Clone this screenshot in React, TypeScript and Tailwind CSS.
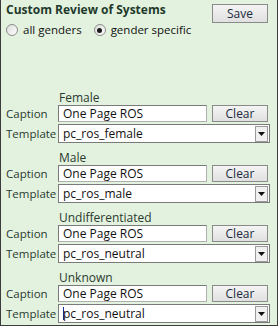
import React from 'react';

type Section = { title: string; caption: string; template: string; caret?: boolean };

const SECTIONS: Section[] = [
  { title: 'Female', caption: 'One Page ROS', template: 'pc_ros_female' },
  { title: 'Male', caption: 'One Page ROS', template: 'pc_ros_male' },
  { title: 'Undifferentiated', caption: 'One Page ROS', template: 'pc_ros_neutral' },
  { title: 'Unknown', caption: 'One Page ROS', template: 'pc_ros_neutral', caret: true },
];

function Button({ label, h = 'h-[17px]' }: { label: string; h?: string }) {
  return (
    <div
      className={`w-[56px] ${h} flex items-center justify-center border border-[#8a8a8a] bg-gradient-to-b from-[#f4f4f4] to-[#e0e0e0] text-[12px] leading-none text-[#1a2a40]`}
    >
      {label}
    </div>
  );
}

function Radio({ checked, label }: { checked?: boolean; label: string }) {
  return (
    <div className="flex items-center gap-[5px]">
      <div className="w-[12px] h-[12px] rounded-full border border-[#8c8c8c] bg-gradient-to-br from-[#dcdcdc] to-white flex items-center justify-center">
        {checked && <div className="w-[5px] h-[5px] rounded-full bg-[#1a1a1a]" />}
      </div>
      <span className="text-[11.5px] font-medium text-[#111]">{label}</span>
    </div>
  );
}

function SectionBlock({ s }: { s: Section }) {
  return (
    <div className="flex flex-col h-[60px]">
      <div className="h-[15px] pl-[58px] text-[12px] leading-[15px] text-[#2a3a30]">{s.title}</div>
      <div className="flex items-center h-[17px]">
        <div className="w-[57px] pl-[5px] text-[11.5px] text-[#2a3a30]">Caption</div>
        <div className="w-[149px] h-[17px] bg-white border border-[#b0b0b0] border-t-[#7a7a7a] border-l-[#7a7a7a] flex items-center pl-[4px] text-[12px] text-[#111]">
          {s.caption}
        </div>
        <div className="ml-[5px]">
          <Button label="Clear" />
        </div>
      </div>
      <div className="flex items-center h-[19px] mt-[2px]">
        <div className="w-[57px] pl-[5px] text-[11.5px] text-[#2a3a30]">Template</div>
        <div className="w-[212px] h-[19px] bg-white border border-[#7a7a7a] flex items-center">
          <div className="flex-1 flex items-center pl-[4px] text-[12px] text-[#111]">
            {s.caret && <span className="w-[1px] h-[13px] bg-[#1030a0] -mr-[1px]" />}
            {s.template}
          </div>
          <div className="w-[13px] h-[16px] mr-[1px] bg-[#f0f0f0] border border-[#9a9a9a] flex items-center justify-center">
            <svg width="7" height="4" viewBox="0 0 7 4">
              <polygon points="0,0 7,0 3.5,4" fill="#111" />
            </svg>
          </div>
        </div>
      </div>
    </div>
  );
}

export default function App() {
  return (
    <div className="w-[278px] h-[326px] bg-[#e3f2df] border-x border-b border-[#3c3c3c] font-['Open_Sans',sans-serif] overflow-hidden">
      <div className="h-[90px] flex justify-between pl-[5px] pr-[9px]">
        <div className="flex flex-col">
          <div className="h-[19px] leading-[19px] text-[12px] font-bold text-[#1f3a2c]">Custom Review of Systems</div>
          <div className="flex items-center gap-[12px] h-[22px]">
            <Radio label="all genders" />
            <Radio checked label="gender specific" />
          </div>
        </div>
        <div className="pt-[4px]">
          <Button label="Save" h="h-[19px]" />
        </div>
      </div>
      <div className="flex flex-col">
        {SECTIONS.map((s) => (
          <SectionBlock key={s.title} s={s} />
        ))}
      </div>
    </div>
  );
}
